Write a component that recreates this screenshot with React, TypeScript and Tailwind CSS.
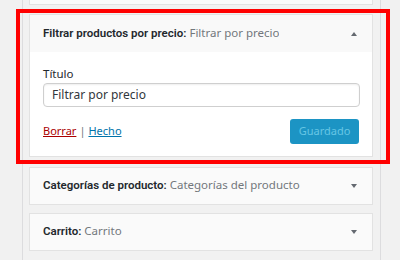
const boldFont = { fontFamily: 'Roboto, "Noto Sans", sans-serif' };

function Arrow({ up }: { up?: boolean }) {
  return up ? (
    <span className="h-0 w-0 border-x-[3.5px] border-b-[4px] border-x-transparent border-b-[#646970]" />
  ) : (
    <span className="h-0 w-0 border-x-[3.5px] border-t-[4px] border-x-transparent border-t-[#646970]" />
  );
}

function WidgetTitle({ name, title }: { name: string; title: string }) {
  return (
    <p className="truncate">
      <span className="text-[11.5px] font-semibold text-[#23282d]" style={boldFont}>
        {name}
      </span>
      <span className="text-[#72777c]"> {title}</span>
    </p>
  );
}

export default function App() {
  const font = { fontFamily: '"Noto Sans", "Open Sans", sans-serif' };
  return (
    <div className="relative h-[260px] w-[400px] overflow-hidden bg-[#f1f1f1]" style={font}>
      <div className="flex h-full">
        <div className="w-[22px] shrink-0" />
        <div className="flex w-[359px] shrink-0 flex-col border-x border-[#dcdcde] px-[6px]">
          {/* previous widget, mostly scrolled out */}
          <div className="h-[5px] w-[344px] border-x border-b border-[#e2e2e2] bg-[#fafafa]" />

          {/* open widget */}
          <div className="mt-[9px] w-[344px] border border-[#e2e2e2] bg-white">
            <div className="flex h-[37px] items-center justify-between bg-[#f9f9f9] pl-[13px] pr-[15px] text-[11.5px]">
              <WidgetTitle name="Filtrar productos por precio:" title="Filtrar por precio" />
              <Arrow up />
            </div>
            <div className="px-[13px] pb-[12px] pt-[14px]">
              <label className="block text-[11.5px] leading-[15px] text-[#23282d]">Título</label>
              <input
                readOnly
                value="Filtrar por precio"
                className="h-[24px] w-[317px] rounded-[4px] border border-[#cfcfcf] px-[8px] text-[12px] text-[#32373c] shadow-[inset_0_1px_2px_rgba(0,0,0,0.07)] outline-none"
              />
              <div className="mt-[12px] flex items-center justify-between">
                <div className="flex text-[11px] leading-[16px]">
                  <a className="text-[#a00] underline">Borrar</a>
                  <span className="mx-[3px] text-[#72777c]">|</span>
                  <a className="text-[#0073aa] underline">Hecho</a>
                </div>
                <button
                  type="button"
                  disabled
                  className="h-[25px] w-[69px] rounded-[3px] bg-[#1c94c4] text-[11px] text-[#66c6e4]"
                >
                  Guardado
                </button>
              </div>
            </div>
          </div>

          {/* collapsed widgets */}
          <div className="mt-[10px] flex h-[38px] w-[344px] items-center justify-between border border-[#e2e2e2] bg-[#fafafa] pl-[13px] pr-[15px] text-[11.5px]">
            <WidgetTitle name="Categorías de producto:" title="Categorías del producto" />
            <Arrow />
          </div>
          <div className="mt-[8px] flex h-[38px] w-[344px] items-center justify-between border border-[#e2e2e2] bg-[#fafafa] pl-[13px] pr-[15px] text-[11.5px]">
            <WidgetTitle name="Carrito:" title="Carrito" />
            <Arrow />
          </div>
        </div>
      </div>

      {/* red annotation frame */}
      <div className="pointer-events-none absolute left-[16px] top-[9px] h-[155px] w-[374px] border-4 border-[#ff0000]" />
    </div>
  );
}
